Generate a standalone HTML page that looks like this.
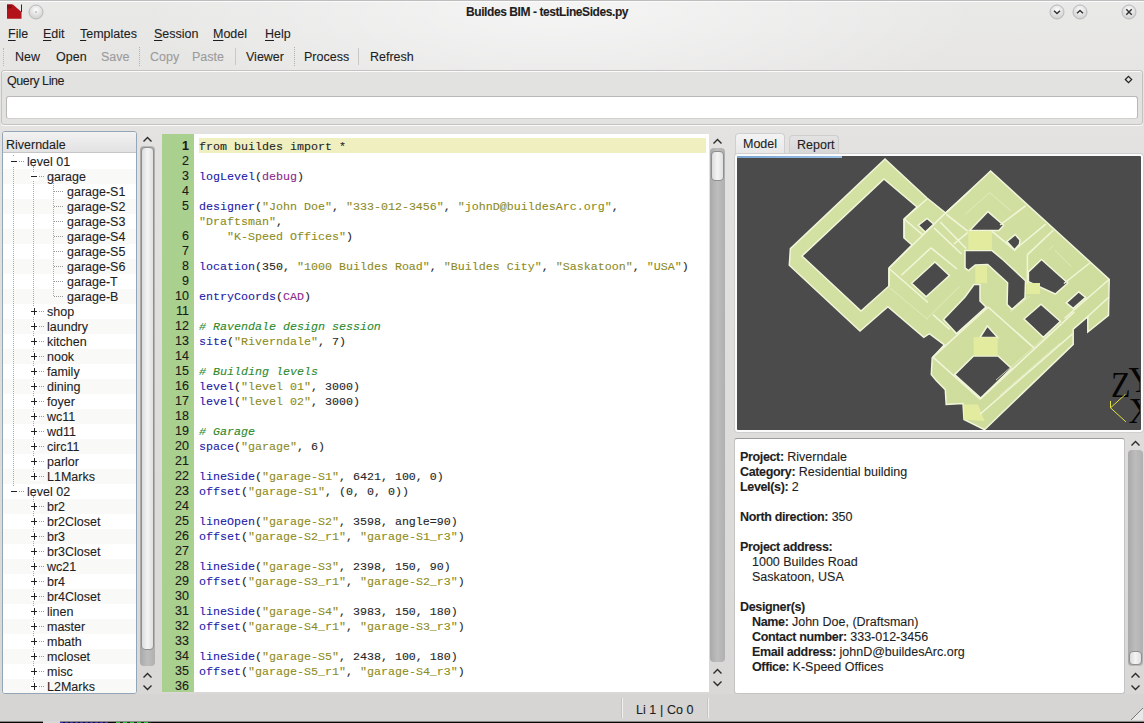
<!DOCTYPE html>
<html><head><meta charset="utf-8">
<style>
*{box-sizing:border-box;margin:0;padding:0}
html,body{width:1144px;height:723px;overflow:hidden}
body{position:relative;background:#e0dfde;font-family:"Liberation Sans",sans-serif;font-size:12.5px;color:#1e1e22;-webkit-text-stroke:0.1px currentColor}
.a{position:absolute;white-space:pre}
u{text-underline-offset:2px}
.t{position:absolute;white-space:pre;line-height:15px;height:15px}
.mono{font-family:"Liberation Mono",monospace}
.g{color:#9b9b9b}
.fn{color:#2121a8}
.st{color:#8c8c1c}
.cn{color:#8a2a8a}
.cm{color:#2c8a2c;font-style:italic}
.ar{width:9px;height:5px}
</style></head><body>

<div class="a" style="left:0;top:0;width:1144px;height:697px;background:linear-gradient(#e9e9e8 0px,#e3e2e1 140px,#d9d8d7 697px)"></div>
<div class="a" style="left:0;top:0;width:1144px;height:200px;background:radial-gradient(ellipse 420px 120px at 560px 10px,rgba(255,255,255,.55),rgba(255,255,255,0))"></div>
<div class="a" style="left:0;top:694px;width:1144px;height:27px;background:#d6d5d4"></div>
<div class="a" style="left:0;top:721px;width:1144px;height:1px;background:#8a8a8a"></div>
<div class="a" style="left:0;top:722px;width:1144px;height:1px;background:#060606"></div>
<div class="a" style="left:43px;top:721px;width:17px;height:2px;background:#d8d8d8"></div>
<div class="a" style="left:60px;top:722px;width:48px;height:1px;background:repeating-linear-gradient(90deg,#3a32a0 0 3px,#101030 3px 5px)"></div>
<div class="a" style="left:116px;top:722px;width:35px;height:1px;background:repeating-linear-gradient(90deg,#38c040 0 4px,#103010 4px 7px)"></div>
<div class="a" style="left:0;top:0;width:1144px;height:1px;background:#bdbdbd"></div>
<div class="a" style="left:0;top:1px;width:1144px;height:1px;background:#fbfbfb"></div>
<div class="t" style="left:466px;top:5px;font-weight:bold;font-size:12px;letter-spacing:-0.42px">Buildes BIM - testLineSides.py</div>
<svg class="a" style="left:6px;top:3px" width="18" height="18" viewBox="0 0 18 18">
<path d="M1 1.5 L7 1.5 L15.5 9 L15.5 15.8 L1 15.8 Z" fill="#b3141b"/>
<path d="M1 1.5 L6 1.5 L6 5 L1 6 Z" fill="#8a0f14"/>
<path d="M15.5 1.5 L15.5 9" stroke="#2a2a2a" stroke-width="1"/>
</svg>
<svg class="a" style="left:27px;top:3px" width="18" height="18" viewBox="0 0 18 18">
<defs><radialGradient id="cg36" cx="50%" cy="35%" r="60%"><stop offset="0" stop-color="#fdfdfd"/><stop offset="1" stop-color="#d2d2d2"/></radialGradient></defs>
<circle cx="9" cy="9" r="7" fill="url(#cg36)" stroke="#b9b9b9" stroke-width="1"/><circle cx="9" cy="9" r="0.7" fill="#888"/></svg>
<svg class="a" style="left:1048px;top:3px" width="18" height="18" viewBox="0 0 18 18">
<defs><radialGradient id="cg1057" cx="50%" cy="35%" r="60%"><stop offset="0" stop-color="#fdfdfd"/><stop offset="1" stop-color="#d2d2d2"/></radialGradient></defs>
<circle cx="9" cy="9" r="7" fill="url(#cg1057)" stroke="#b9b9b9" stroke-width="1"/><path d="M6 7.8 L9 10.5 L12 7.8" fill="none" stroke="#333" stroke-width="1.5"/></svg>
<svg class="a" style="left:1071px;top:3px" width="18" height="18" viewBox="0 0 18 18">
<defs><radialGradient id="cg1080" cx="50%" cy="35%" r="60%"><stop offset="0" stop-color="#fdfdfd"/><stop offset="1" stop-color="#d2d2d2"/></radialGradient></defs>
<circle cx="9" cy="9" r="7" fill="url(#cg1080)" stroke="#b9b9b9" stroke-width="1"/><path d="M6 10.3 L9 7.5 L12 10.3" fill="none" stroke="#333" stroke-width="1.5"/></svg>
<svg class="a" style="left:1120px;top:3px" width="18" height="18" viewBox="0 0 18 18">
<defs><radialGradient id="cg1129" cx="50%" cy="35%" r="60%"><stop offset="0" stop-color="#fdfdfd"/><stop offset="1" stop-color="#d2d2d2"/></radialGradient></defs>
<circle cx="9" cy="9" r="7" fill="url(#cg1129)" stroke="#b9b9b9" stroke-width="1"/><path d="M6.3 6.3 L11.7 11.7 M11.7 6.3 L6.3 11.7" fill="none" stroke="#333" stroke-width="1.5"/></svg>
<div class="t" style="left:8px;top:27px"><u>F</u>ile</div>
<div class="t" style="left:43px;top:27px"><u>E</u>dit</div>
<div class="t" style="left:80px;top:27px"><u>T</u>emplates</div>
<div class="t" style="left:154px;top:27px"><u>S</u>ession</div>
<div class="t" style="left:213px;top:27px"><u>M</u>odel</div>
<div class="t" style="left:265px;top:27px"><u>H</u>elp</div>
<div class="a" style="left:3px;top:48px;width:2px;height:18px;border-left:1px dotted #b8b8b8"></div>
<div class="t" style="left:15px;top:50px">New</div>
<div class="t" style="left:56px;top:50px">Open</div>
<div class="t g" style="left:101px;top:50px">Save</div>
<div class="t g" style="left:150px;top:50px">Copy</div>
<div class="t g" style="left:192px;top:50px">Paste</div>
<div class="t" style="left:246px;top:50px">Viewer</div>
<div class="t" style="left:304px;top:50px">Process</div>
<div class="t" style="left:370px;top:50px">Refresh</div>
<div class="a" style="left:139px;top:47px;width:1px;height:19px;border-left:1px dotted #b0b0b0"></div>
<div class="a" style="left:294px;top:47px;width:1px;height:19px;border-left:1px dotted #b0b0b0"></div>
<div class="a" style="left:235px;top:48px;width:1px;height:17px;background:#c8c8c8"></div>
<div class="a" style="left:358px;top:48px;width:1px;height:17px;background:#c8c8c8"></div>
<div class="a" style="left:1px;top:70px;width:1142px;height:55px;border:1px solid #c4c3c2;border-radius:3px;background:#e2e2e1;box-shadow:inset 0 1px 0 #fbfbfb,0 1px 0 #fafafa"></div>
<div class="t" style="left:7px;top:74px;letter-spacing:-0.4px">Query Line</div>
<svg class="a" style="left:1124px;top:75px" width="9" height="9" viewBox="0 0 9 9"><path d="M4.5 1.3 L7.7 4.5 L4.5 7.7 L1.3 4.5 Z" fill="none" stroke="#222" stroke-width="1.2"/></svg>
<div class="a" style="left:6px;top:96px;width:1132px;height:23px;border:1px solid #b9b8b7;border-bottom-color:#d2d1d0;border-radius:3px;background:#fff"></div>
<div class="a" style="left:2px;top:131px;width:135px;height:563px;border:1px solid #93a6b8;border-radius:3px;background:#fff;overflow:hidden">
<div class="a" style="left:0;top:0;width:133px;height:21px;background:linear-gradient(#f2f2f2,#e2e2e2);border-bottom:1px solid #c6c6c6"></div>
<div class="t" style="left:3px;top:6px">Riverndale</div>
<div class="a" style="left:0;top:37px;width:133px;height:15px;background:#f9f9f8"></div>
<div class="a" style="left:0;top:67px;width:133px;height:15px;background:#f9f9f8"></div>
<div class="a" style="left:0;top:97px;width:133px;height:15px;background:#f9f9f8"></div>
<div class="a" style="left:0;top:127px;width:133px;height:15px;background:#f9f9f8"></div>
<div class="a" style="left:0;top:157px;width:133px;height:15px;background:#f9f9f8"></div>
<div class="a" style="left:0;top:187px;width:133px;height:15px;background:#f9f9f8"></div>
<div class="a" style="left:0;top:217px;width:133px;height:15px;background:#f9f9f8"></div>
<div class="a" style="left:0;top:247px;width:133px;height:15px;background:#f9f9f8"></div>
<div class="a" style="left:0;top:277px;width:133px;height:15px;background:#f9f9f8"></div>
<div class="a" style="left:0;top:307px;width:133px;height:15px;background:#f9f9f8"></div>
<div class="a" style="left:0;top:337px;width:133px;height:15px;background:#f9f9f8"></div>
<div class="a" style="left:0;top:367px;width:133px;height:15px;background:#f9f9f8"></div>
<div class="a" style="left:0;top:397px;width:133px;height:15px;background:#f9f9f8"></div>
<div class="a" style="left:0;top:427px;width:133px;height:15px;background:#f9f9f8"></div>
<div class="a" style="left:0;top:457px;width:133px;height:15px;background:#f9f9f8"></div>
<div class="a" style="left:0;top:487px;width:133px;height:15px;background:#f9f9f8"></div>
<div class="a" style="left:0;top:517px;width:133px;height:15px;background:#f9f9f8"></div>
<div class="a" style="left:0;top:547px;width:133px;height:15px;background:#f9f9f8"></div>
<div class="a" style="left:10px;top:23px;width:1px;height:333px;border-left:1px dotted #aaa"></div>
<div class="a" style="left:30px;top:34px;width:1px;height:310px;border-left:1px dotted #aaa"></div>
<div class="a" style="left:50px;top:45px;width:1px;height:119px;border-left:1px dotted #aaa"></div>
<div class="a" style="left:30px;top:364px;width:1px;height:190px;border-left:1px dotted #aaa"></div>
<div class="t" style="left:24px;top:23px">level 01</div>
<div class="a" style="left:7px;top:25px;width:9px;height:9px;background:#fff"></div>
<div class="a" style="left:8px;top:29px;width:6px;height:1px;background:#222"></div>
<div class="a" style="left:16px;top:29px;width:5px;height:1px;border-top:1px dotted #999"></div>
<div class="t" style="left:44px;top:38px">garage</div>
<div class="a" style="left:27px;top:40px;width:9px;height:9px;background:#fff"></div>
<div class="a" style="left:28px;top:44px;width:6px;height:1px;background:#222"></div>
<div class="a" style="left:36px;top:44px;width:5px;height:1px;border-top:1px dotted #999"></div>
<div class="t" style="left:64px;top:53px">garage-S1</div>
<div class="a" style="left:51px;top:59px;width:9px;height:1px;border-top:1px dotted #999"></div>
<div class="t" style="left:64px;top:68px">garage-S2</div>
<div class="a" style="left:51px;top:74px;width:9px;height:1px;border-top:1px dotted #999"></div>
<div class="t" style="left:64px;top:83px">garage-S3</div>
<div class="a" style="left:51px;top:89px;width:9px;height:1px;border-top:1px dotted #999"></div>
<div class="t" style="left:64px;top:98px">garage-S4</div>
<div class="a" style="left:51px;top:104px;width:9px;height:1px;border-top:1px dotted #999"></div>
<div class="t" style="left:64px;top:113px">garage-S5</div>
<div class="a" style="left:51px;top:119px;width:9px;height:1px;border-top:1px dotted #999"></div>
<div class="t" style="left:64px;top:128px">garage-S6</div>
<div class="a" style="left:51px;top:134px;width:9px;height:1px;border-top:1px dotted #999"></div>
<div class="t" style="left:64px;top:143px">garage-T</div>
<div class="a" style="left:51px;top:149px;width:9px;height:1px;border-top:1px dotted #999"></div>
<div class="t" style="left:64px;top:158px">garage-B</div>
<div class="a" style="left:51px;top:164px;width:9px;height:1px;border-top:1px dotted #999"></div>
<div class="t" style="left:44px;top:173px">shop</div>
<div class="a" style="left:27px;top:175px;width:9px;height:9px;background:#fff"></div>
<div class="a" style="left:28px;top:179px;width:6px;height:1px;background:#222"></div>
<div class="a" style="left:30.5px;top:176px;width:1px;height:7px;background:#222"></div>
<div class="a" style="left:36px;top:179px;width:5px;height:1px;border-top:1px dotted #999"></div>
<div class="t" style="left:44px;top:188px">laundry</div>
<div class="a" style="left:27px;top:190px;width:9px;height:9px;background:#fff"></div>
<div class="a" style="left:28px;top:194px;width:6px;height:1px;background:#222"></div>
<div class="a" style="left:30.5px;top:191px;width:1px;height:7px;background:#222"></div>
<div class="a" style="left:36px;top:194px;width:5px;height:1px;border-top:1px dotted #999"></div>
<div class="t" style="left:44px;top:203px">kitchen</div>
<div class="a" style="left:27px;top:205px;width:9px;height:9px;background:#fff"></div>
<div class="a" style="left:28px;top:209px;width:6px;height:1px;background:#222"></div>
<div class="a" style="left:30.5px;top:206px;width:1px;height:7px;background:#222"></div>
<div class="a" style="left:36px;top:209px;width:5px;height:1px;border-top:1px dotted #999"></div>
<div class="t" style="left:44px;top:218px">nook</div>
<div class="a" style="left:27px;top:220px;width:9px;height:9px;background:#fff"></div>
<div class="a" style="left:28px;top:224px;width:6px;height:1px;background:#222"></div>
<div class="a" style="left:30.5px;top:221px;width:1px;height:7px;background:#222"></div>
<div class="a" style="left:36px;top:224px;width:5px;height:1px;border-top:1px dotted #999"></div>
<div class="t" style="left:44px;top:233px">family</div>
<div class="a" style="left:27px;top:235px;width:9px;height:9px;background:#fff"></div>
<div class="a" style="left:28px;top:239px;width:6px;height:1px;background:#222"></div>
<div class="a" style="left:30.5px;top:236px;width:1px;height:7px;background:#222"></div>
<div class="a" style="left:36px;top:239px;width:5px;height:1px;border-top:1px dotted #999"></div>
<div class="t" style="left:44px;top:248px">dining</div>
<div class="a" style="left:27px;top:250px;width:9px;height:9px;background:#fff"></div>
<div class="a" style="left:28px;top:254px;width:6px;height:1px;background:#222"></div>
<div class="a" style="left:30.5px;top:251px;width:1px;height:7px;background:#222"></div>
<div class="a" style="left:36px;top:254px;width:5px;height:1px;border-top:1px dotted #999"></div>
<div class="t" style="left:44px;top:263px">foyer</div>
<div class="a" style="left:27px;top:265px;width:9px;height:9px;background:#fff"></div>
<div class="a" style="left:28px;top:269px;width:6px;height:1px;background:#222"></div>
<div class="a" style="left:30.5px;top:266px;width:1px;height:7px;background:#222"></div>
<div class="a" style="left:36px;top:269px;width:5px;height:1px;border-top:1px dotted #999"></div>
<div class="t" style="left:44px;top:278px">wc11</div>
<div class="a" style="left:27px;top:280px;width:9px;height:9px;background:#fff"></div>
<div class="a" style="left:28px;top:284px;width:6px;height:1px;background:#222"></div>
<div class="a" style="left:30.5px;top:281px;width:1px;height:7px;background:#222"></div>
<div class="a" style="left:36px;top:284px;width:5px;height:1px;border-top:1px dotted #999"></div>
<div class="t" style="left:44px;top:293px">wd11</div>
<div class="a" style="left:27px;top:295px;width:9px;height:9px;background:#fff"></div>
<div class="a" style="left:28px;top:299px;width:6px;height:1px;background:#222"></div>
<div class="a" style="left:30.5px;top:296px;width:1px;height:7px;background:#222"></div>
<div class="a" style="left:36px;top:299px;width:5px;height:1px;border-top:1px dotted #999"></div>
<div class="t" style="left:44px;top:308px">circ11</div>
<div class="a" style="left:27px;top:310px;width:9px;height:9px;background:#fff"></div>
<div class="a" style="left:28px;top:314px;width:6px;height:1px;background:#222"></div>
<div class="a" style="left:30.5px;top:311px;width:1px;height:7px;background:#222"></div>
<div class="a" style="left:36px;top:314px;width:5px;height:1px;border-top:1px dotted #999"></div>
<div class="t" style="left:44px;top:323px">parlor</div>
<div class="a" style="left:27px;top:325px;width:9px;height:9px;background:#fff"></div>
<div class="a" style="left:28px;top:329px;width:6px;height:1px;background:#222"></div>
<div class="a" style="left:30.5px;top:326px;width:1px;height:7px;background:#222"></div>
<div class="a" style="left:36px;top:329px;width:5px;height:1px;border-top:1px dotted #999"></div>
<div class="t" style="left:44px;top:338px">L1Marks</div>
<div class="a" style="left:27px;top:340px;width:9px;height:9px;background:#fff"></div>
<div class="a" style="left:28px;top:344px;width:6px;height:1px;background:#222"></div>
<div class="a" style="left:30.5px;top:341px;width:1px;height:7px;background:#222"></div>
<div class="a" style="left:36px;top:344px;width:5px;height:1px;border-top:1px dotted #999"></div>
<div class="t" style="left:24px;top:353px">level 02</div>
<div class="a" style="left:7px;top:355px;width:9px;height:9px;background:#fff"></div>
<div class="a" style="left:8px;top:359px;width:6px;height:1px;background:#222"></div>
<div class="a" style="left:16px;top:359px;width:5px;height:1px;border-top:1px dotted #999"></div>
<div class="t" style="left:44px;top:368px">br2</div>
<div class="a" style="left:27px;top:370px;width:9px;height:9px;background:#fff"></div>
<div class="a" style="left:28px;top:374px;width:6px;height:1px;background:#222"></div>
<div class="a" style="left:30.5px;top:371px;width:1px;height:7px;background:#222"></div>
<div class="a" style="left:36px;top:374px;width:5px;height:1px;border-top:1px dotted #999"></div>
<div class="t" style="left:44px;top:383px">br2Closet</div>
<div class="a" style="left:27px;top:385px;width:9px;height:9px;background:#fff"></div>
<div class="a" style="left:28px;top:389px;width:6px;height:1px;background:#222"></div>
<div class="a" style="left:30.5px;top:386px;width:1px;height:7px;background:#222"></div>
<div class="a" style="left:36px;top:389px;width:5px;height:1px;border-top:1px dotted #999"></div>
<div class="t" style="left:44px;top:398px">br3</div>
<div class="a" style="left:27px;top:400px;width:9px;height:9px;background:#fff"></div>
<div class="a" style="left:28px;top:404px;width:6px;height:1px;background:#222"></div>
<div class="a" style="left:30.5px;top:401px;width:1px;height:7px;background:#222"></div>
<div class="a" style="left:36px;top:404px;width:5px;height:1px;border-top:1px dotted #999"></div>
<div class="t" style="left:44px;top:413px">br3Closet</div>
<div class="a" style="left:27px;top:415px;width:9px;height:9px;background:#fff"></div>
<div class="a" style="left:28px;top:419px;width:6px;height:1px;background:#222"></div>
<div class="a" style="left:30.5px;top:416px;width:1px;height:7px;background:#222"></div>
<div class="a" style="left:36px;top:419px;width:5px;height:1px;border-top:1px dotted #999"></div>
<div class="t" style="left:44px;top:428px">wc21</div>
<div class="a" style="left:27px;top:430px;width:9px;height:9px;background:#fff"></div>
<div class="a" style="left:28px;top:434px;width:6px;height:1px;background:#222"></div>
<div class="a" style="left:30.5px;top:431px;width:1px;height:7px;background:#222"></div>
<div class="a" style="left:36px;top:434px;width:5px;height:1px;border-top:1px dotted #999"></div>
<div class="t" style="left:44px;top:443px">br4</div>
<div class="a" style="left:27px;top:445px;width:9px;height:9px;background:#fff"></div>
<div class="a" style="left:28px;top:449px;width:6px;height:1px;background:#222"></div>
<div class="a" style="left:30.5px;top:446px;width:1px;height:7px;background:#222"></div>
<div class="a" style="left:36px;top:449px;width:5px;height:1px;border-top:1px dotted #999"></div>
<div class="t" style="left:44px;top:458px">br4Closet</div>
<div class="a" style="left:27px;top:460px;width:9px;height:9px;background:#fff"></div>
<div class="a" style="left:28px;top:464px;width:6px;height:1px;background:#222"></div>
<div class="a" style="left:30.5px;top:461px;width:1px;height:7px;background:#222"></div>
<div class="a" style="left:36px;top:464px;width:5px;height:1px;border-top:1px dotted #999"></div>
<div class="t" style="left:44px;top:473px">linen</div>
<div class="a" style="left:27px;top:475px;width:9px;height:9px;background:#fff"></div>
<div class="a" style="left:28px;top:479px;width:6px;height:1px;background:#222"></div>
<div class="a" style="left:30.5px;top:476px;width:1px;height:7px;background:#222"></div>
<div class="a" style="left:36px;top:479px;width:5px;height:1px;border-top:1px dotted #999"></div>
<div class="t" style="left:44px;top:488px">master</div>
<div class="a" style="left:27px;top:490px;width:9px;height:9px;background:#fff"></div>
<div class="a" style="left:28px;top:494px;width:6px;height:1px;background:#222"></div>
<div class="a" style="left:30.5px;top:491px;width:1px;height:7px;background:#222"></div>
<div class="a" style="left:36px;top:494px;width:5px;height:1px;border-top:1px dotted #999"></div>
<div class="t" style="left:44px;top:503px">mbath</div>
<div class="a" style="left:27px;top:505px;width:9px;height:9px;background:#fff"></div>
<div class="a" style="left:28px;top:509px;width:6px;height:1px;background:#222"></div>
<div class="a" style="left:30.5px;top:506px;width:1px;height:7px;background:#222"></div>
<div class="a" style="left:36px;top:509px;width:5px;height:1px;border-top:1px dotted #999"></div>
<div class="t" style="left:44px;top:518px">mcloset</div>
<div class="a" style="left:27px;top:520px;width:9px;height:9px;background:#fff"></div>
<div class="a" style="left:28px;top:524px;width:6px;height:1px;background:#222"></div>
<div class="a" style="left:30.5px;top:521px;width:1px;height:7px;background:#222"></div>
<div class="a" style="left:36px;top:524px;width:5px;height:1px;border-top:1px dotted #999"></div>
<div class="t" style="left:44px;top:533px">misc</div>
<div class="a" style="left:27px;top:535px;width:9px;height:9px;background:#fff"></div>
<div class="a" style="left:28px;top:539px;width:6px;height:1px;background:#222"></div>
<div class="a" style="left:30.5px;top:536px;width:1px;height:7px;background:#222"></div>
<div class="a" style="left:36px;top:539px;width:5px;height:1px;border-top:1px dotted #999"></div>
<div class="t" style="left:44px;top:548px">L2Marks</div>
<div class="a" style="left:27px;top:550px;width:9px;height:9px;background:#fff"></div>
<div class="a" style="left:28px;top:554px;width:6px;height:1px;background:#222"></div>
<div class="a" style="left:30.5px;top:551px;width:1px;height:7px;background:#222"></div>
<div class="a" style="left:36px;top:554px;width:5px;height:1px;border-top:1px dotted #999"></div>
</div>
<svg class="a" style="left:142px;top:136px" width="11" height="7" viewBox="0 0 11 7"><path d="M1.5 5.5 L5.5 1.5 L9.5 5.5" fill="none" stroke="#2a2a2a" stroke-width="1.4"/></svg>
<div class="a" style="left:140px;top:146px;width:15px;height:520px;border-radius:4px;background:linear-gradient(90deg,#a9a9a9,#bdbdbd 50%,#b0b0b0);"></div>
<div class="a" style="left:141px;top:147px;width:13px;height:503px;border-radius:4px;border:1px solid #8f8f8f;background:linear-gradient(90deg,#dcdcdc,#f4f4f4 50%,#e0e0e0)"></div>
<svg class="a" style="left:142px;top:672px" width="11" height="7" viewBox="0 0 11 7"><path d="M1.5 5.5 L5.5 1.5 L9.5 5.5" fill="none" stroke="#2a2a2a" stroke-width="1.4"/></svg>
<svg class="a" style="left:142px;top:684px" width="11" height="7" viewBox="0 0 11 7"><path d="M1.5 1.5 L5.5 5.5 L9.5 1.5" fill="none" stroke="#2a2a2a" stroke-width="1.4"/></svg>
<svg class="a" style="left:712px;top:138px" width="11" height="7" viewBox="0 0 11 7"><path d="M1.5 5.5 L5.5 1.5 L9.5 5.5" fill="none" stroke="#2a2a2a" stroke-width="1.4"/></svg>
<div class="a" style="left:710px;top:148px;width:15px;height:514px;border-radius:4px;background:linear-gradient(90deg,#a9a9a9,#bdbdbd 50%,#b0b0b0);"></div>
<div class="a" style="left:711px;top:151px;width:13px;height:30px;border-radius:4px;border:1px solid #8f8f8f;background:linear-gradient(90deg,#dcdcdc,#f4f4f4 50%,#e0e0e0)"></div>
<svg class="a" style="left:712px;top:668px" width="11" height="7" viewBox="0 0 11 7"><path d="M1.5 5.5 L5.5 1.5 L9.5 5.5" fill="none" stroke="#2a2a2a" stroke-width="1.4"/></svg>
<svg class="a" style="left:712px;top:680px" width="11" height="7" viewBox="0 0 11 7"><path d="M1.5 1.5 L5.5 5.5 L9.5 1.5" fill="none" stroke="#2a2a2a" stroke-width="1.4"/></svg>
<svg class="a" style="left:1130px;top:440px" width="11" height="7" viewBox="0 0 11 7"><path d="M1.5 5.5 L5.5 1.5 L9.5 5.5" fill="none" stroke="#2a2a2a" stroke-width="1.4"/></svg>
<div class="a" style="left:1128px;top:450px;width:15px;height:216px;border-radius:4px;background:linear-gradient(90deg,#a9a9a9,#bdbdbd 50%,#b0b0b0);"></div>
<div class="a" style="left:1129px;top:651px;width:13px;height:14px;border-radius:4px;border:1px solid #8f8f8f;background:linear-gradient(90deg,#dcdcdc,#f4f4f4 50%,#e0e0e0)"></div>
<svg class="a" style="left:1130px;top:672px" width="11" height="7" viewBox="0 0 11 7"><path d="M1.5 5.5 L5.5 1.5 L9.5 5.5" fill="none" stroke="#2a2a2a" stroke-width="1.4"/></svg>
<svg class="a" style="left:1130px;top:684px" width="11" height="7" viewBox="0 0 11 7"><path d="M1.5 1.5 L5.5 5.5 L9.5 1.5" fill="none" stroke="#2a2a2a" stroke-width="1.4"/></svg>
<div class="a" style="left:162px;top:134px;width:547px;height:558px;background:#fff"></div>
<div class="a" style="left:162px;top:134px;width:32px;height:558px;background:#a9d08e"></div>
<div class="a" style="left:199px;top:138px;width:507px;height:15px;background:#efefbf"></div>
<div class="t" style="left:162px;top:139px;width:27px;text-align:right;font-weight:bold;color:#1a1a1a">1</div>
<div class="t mono" style="left:199px;top:140px;font-size:11.67px;color:#262626">from buildes import *</div>
<div class="t" style="left:162px;top:154px;width:27px;text-align:right;color:#1a1a1a">2</div>
<div class="t" style="left:162px;top:169px;width:27px;text-align:right;color:#1a1a1a">3</div>
<div class="t mono" style="left:199px;top:170px;font-size:11.67px;color:#262626"><span class="fn">logLevel</span>(<span class="cn">debug</span>)</div>
<div class="t" style="left:162px;top:184px;width:27px;text-align:right;color:#1a1a1a">4</div>
<div class="t" style="left:162px;top:199px;width:27px;text-align:right;color:#1a1a1a">5</div>
<div class="t mono" style="left:199px;top:200px;font-size:11.67px;color:#262626"><span class="fn">designer</span>(<span class="st">"John Doe"</span>, <span class="st">"333-012-3456"</span>, <span class="st">"johnD@buildesArc.org"</span>,</div>
<div class="t mono" style="left:199px;top:215px;font-size:11.67px;color:#262626"><span class="st">"Draftsman"</span>,</div>
<div class="t" style="left:162px;top:229px;width:27px;text-align:right;color:#1a1a1a">6</div>
<div class="t mono" style="left:199px;top:230px;font-size:11.67px;color:#262626">    <span class="st">"K-Speed Offices"</span>)</div>
<div class="t" style="left:162px;top:244px;width:27px;text-align:right;color:#1a1a1a">7</div>
<div class="t" style="left:162px;top:259px;width:27px;text-align:right;color:#1a1a1a">8</div>
<div class="t mono" style="left:199px;top:260px;font-size:11.67px;color:#262626"><span class="fn">location</span>(350, <span class="st">"1000 Buildes Road"</span>, <span class="st">"Buildes City"</span>, <span class="st">"Saskatoon"</span>, <span class="st">"USA"</span>)</div>
<div class="t" style="left:162px;top:274px;width:27px;text-align:right;color:#1a1a1a">9</div>
<div class="t" style="left:162px;top:289px;width:27px;text-align:right;color:#1a1a1a">10</div>
<div class="t mono" style="left:199px;top:290px;font-size:11.67px;color:#262626"><span class="fn">entryCoords</span>(<span class="cn">CAD</span>)</div>
<div class="t" style="left:162px;top:304px;width:27px;text-align:right;color:#1a1a1a">11</div>
<div class="t" style="left:162px;top:319px;width:27px;text-align:right;color:#1a1a1a">12</div>
<div class="t mono" style="left:199px;top:320px;font-size:11.67px;color:#262626"><span class="cm"># Ravendale design session</span></div>
<div class="t" style="left:162px;top:334px;width:27px;text-align:right;color:#1a1a1a">13</div>
<div class="t mono" style="left:199px;top:335px;font-size:11.67px;color:#262626"><span class="fn">site</span>(<span class="st">"Riverndale"</span>, 7)</div>
<div class="t" style="left:162px;top:349px;width:27px;text-align:right;color:#1a1a1a">14</div>
<div class="t" style="left:162px;top:364px;width:27px;text-align:right;color:#1a1a1a">15</div>
<div class="t mono" style="left:199px;top:365px;font-size:11.67px;color:#262626"><span class="cm"># Building levels</span></div>
<div class="t" style="left:162px;top:379px;width:27px;text-align:right;color:#1a1a1a">16</div>
<div class="t mono" style="left:199px;top:380px;font-size:11.67px;color:#262626"><span class="fn">level</span>(<span class="st">"level 01"</span>, 3000)</div>
<div class="t" style="left:162px;top:394px;width:27px;text-align:right;color:#1a1a1a">17</div>
<div class="t mono" style="left:199px;top:395px;font-size:11.67px;color:#262626"><span class="fn">level</span>(<span class="st">"level 02"</span>, 3000)</div>
<div class="t" style="left:162px;top:409px;width:27px;text-align:right;color:#1a1a1a">18</div>
<div class="t" style="left:162px;top:424px;width:27px;text-align:right;color:#1a1a1a">19</div>
<div class="t mono" style="left:199px;top:425px;font-size:11.67px;color:#262626"><span class="cm"># Garage</span></div>
<div class="t" style="left:162px;top:439px;width:27px;text-align:right;color:#1a1a1a">20</div>
<div class="t mono" style="left:199px;top:440px;font-size:11.67px;color:#262626"><span class="fn">space</span>(<span class="st">"garage"</span>, 6)</div>
<div class="t" style="left:162px;top:454px;width:27px;text-align:right;color:#1a1a1a">21</div>
<div class="t" style="left:162px;top:469px;width:27px;text-align:right;color:#1a1a1a">22</div>
<div class="t mono" style="left:199px;top:470px;font-size:11.67px;color:#262626"><span class="fn">lineSide</span>(<span class="st">"garage-S1"</span>, 6421, 100, 0)</div>
<div class="t" style="left:162px;top:484px;width:27px;text-align:right;color:#1a1a1a">23</div>
<div class="t mono" style="left:199px;top:485px;font-size:11.67px;color:#262626"><span class="fn">offset</span>(<span class="st">"garage-S1"</span>, (0, 0, 0))</div>
<div class="t" style="left:162px;top:499px;width:27px;text-align:right;color:#1a1a1a">24</div>
<div class="t" style="left:162px;top:514px;width:27px;text-align:right;color:#1a1a1a">25</div>
<div class="t mono" style="left:199px;top:515px;font-size:11.67px;color:#262626"><span class="fn">lineOpen</span>(<span class="st">"garage-S2"</span>, 3598, angle=90)</div>
<div class="t" style="left:162px;top:529px;width:27px;text-align:right;color:#1a1a1a">26</div>
<div class="t mono" style="left:199px;top:530px;font-size:11.67px;color:#262626"><span class="fn">offset</span>(<span class="st">"garage-S2_r1"</span>, <span class="st">"garage-S1_r3"</span>)</div>
<div class="t" style="left:162px;top:544px;width:27px;text-align:right;color:#1a1a1a">27</div>
<div class="t" style="left:162px;top:559px;width:27px;text-align:right;color:#1a1a1a">28</div>
<div class="t mono" style="left:199px;top:560px;font-size:11.67px;color:#262626"><span class="fn">lineSide</span>(<span class="st">"garage-S3"</span>, 2398, 150, 90)</div>
<div class="t" style="left:162px;top:574px;width:27px;text-align:right;color:#1a1a1a">29</div>
<div class="t mono" style="left:199px;top:575px;font-size:11.67px;color:#262626"><span class="fn">offset</span>(<span class="st">"garage-S3_r1"</span>, <span class="st">"garage-S2_r3"</span>)</div>
<div class="t" style="left:162px;top:589px;width:27px;text-align:right;color:#1a1a1a">30</div>
<div class="t" style="left:162px;top:604px;width:27px;text-align:right;color:#1a1a1a">31</div>
<div class="t mono" style="left:199px;top:605px;font-size:11.67px;color:#262626"><span class="fn">lineSide</span>(<span class="st">"garage-S4"</span>, 3983, 150, 180)</div>
<div class="t" style="left:162px;top:619px;width:27px;text-align:right;color:#1a1a1a">32</div>
<div class="t mono" style="left:199px;top:620px;font-size:11.67px;color:#262626"><span class="fn">offset</span>(<span class="st">"garage-S4_r1"</span>, <span class="st">"garage-S3_r3"</span>)</div>
<div class="t" style="left:162px;top:634px;width:27px;text-align:right;color:#1a1a1a">33</div>
<div class="t" style="left:162px;top:649px;width:27px;text-align:right;color:#1a1a1a">34</div>
<div class="t mono" style="left:199px;top:650px;font-size:11.67px;color:#262626"><span class="fn">lineSide</span>(<span class="st">"garage-S5"</span>, 2438, 100, 180)</div>
<div class="t" style="left:162px;top:664px;width:27px;text-align:right;color:#1a1a1a">35</div>
<div class="t mono" style="left:199px;top:665px;font-size:11.67px;color:#262626"><span class="fn">offset</span>(<span class="st">"garage-S5_r1"</span>, <span class="st">"garage-S4_r3"</span>)</div>
<div class="t" style="left:162px;top:679px;width:27px;text-align:right;color:#1a1a1a">36</div>
<div class="a" style="left:735px;top:133px;width:50px;height:24px;border:1px solid #cfcfcf;border-bottom:none;border-radius:4px 4px 0 0;background:linear-gradient(#f3f3f3,#e6e6e6)"></div>
<div class="a" style="left:789px;top:135px;width:50px;height:21px;border:1px solid #cdcdcd;border-bottom:none;border-radius:4px 4px 0 0;background:linear-gradient(#e3e3e3,#d5d5d5)"></div>
<div class="t" style="left:743px;top:137px">Model</div>
<div class="t" style="left:797px;top:138px">Report</div>
<div class="a" style="left:735px;top:154px;width:408px;height:278px;border:2px solid #fbfbfb;border-radius:3px;background:#4c4b4b;box-shadow:0 0 0 1px #cfcfcf"></div>
<div class="a" style="left:737px;top:156px;width:105px;height:2px;background:linear-gradient(90deg,#7aa7d6,#9cc0e6)"></div>
<svg class="a" style="left:737px;top:156px" width="403" height="274" viewBox="0 0 403 274">
<defs><linearGradient id="wl" x1="0" y1="0" x2="1" y2="1"><stop offset="0" stop-color="#d4e2a4"/><stop offset="1" stop-color="#ccdb9a"/></linearGradient></defs>
<polygon points="148.0,3.0 190.0,42.0 208.7,57.0 253.6,15.0 372.2,123.4 371.5,159.4 350.8,176.0 350.8,160.7 336.2,173.2 336.2,188.4 247.5,273.7 227.0,263.4 226.0,247.5 209.2,248.5 208.3,233.6 199.0,224.2 194.3,218.6 195.2,201.8 207.4,188.8 192.4,177.6 186.8,181.3 150.9,150.8 123.0,175.0 52.3,109.3 53.4,92.7" fill="url(#wl)" stroke="#f1f6da" stroke-width="1.5"/>
<polygon points="147.0,23.0 180.0,51.0 167.0,63.0 167.0,82.0 175.0,89.0 152.0,112.0 152.0,130.0 124.0,155.0 65.0,100.0" fill="#4b4a4a" stroke="#f1f6da" stroke-width="1.5"/>
<polygon points="181.4,69.2 190.1,62.4 196.9,68.2 188.2,76.0" fill="#4b4a4a" stroke="#f1f6da" stroke-width="1.5"/>
<polygon points="232.7,74.5 251.0,55.6 266.6,69.2 262.0,74.5" fill="#4b4a4a" stroke="#f1f6da" stroke-width="1.5"/>
<polygon points="174.6,127.3 197.9,106.0 212.4,119.5 189.1,140.8" fill="#4b4a4a" stroke="#f1f6da" stroke-width="1.5"/>
<polygon points="206.5,163.5 228.0,141.0 237.0,128.5 243.0,128.5 243.0,145.0 249.0,151.0 219.5,177.6" fill="#4b4a4a" stroke="#f1f6da" stroke-width="1.5"/>
<polygon points="228.0,94.6 255.0,94.6 266.2,104.0 288.5,124.8 288.0,141.8 275.0,153.4 270.1,148.5 270.6,126.7 250.7,108.4 238.3,109.0 231.4,114.6 228.0,111.9" fill="#4b4a4a" stroke="#f1f6da" stroke-width="1.5"/>
<polygon points="269.9,85.5 278.2,78.6 283.0,84.1 282.4,88.3 277.5,93.8" fill="#4b4a4a" stroke="#f1f6da" stroke-width="1.5"/>
<polygon points="291.4,115.9 304.5,103.5 330.8,127.0 318.3,138.0 291.4,125.6" fill="#4b4a4a" stroke="#f1f6da" stroke-width="1.5"/>
<polygon points="329.3,146.9 341.8,135.8 348.7,141.4 336.2,152.4" fill="#4b4a4a" stroke="#f1f6da" stroke-width="1.5"/>
<polygon points="287.0,163.0 304.0,148.2 323.5,165.4 306.3,181.3" fill="#4b4a4a" stroke="#f1f6da" stroke-width="1.5"/>
<polygon points="217.6,218.6 236.5,200.0 261.0,200.0 274.4,212.2 243.7,242.0" fill="#4b4a4a" stroke="#f1f6da" stroke-width="1.5"/>
<polygon points="243.0,181.5 250.3,170.0 260.7,181.5" fill="#4b4a4a" stroke="#f1f6da" stroke-width="1.5"/>
<polygon points="231.4,75.2 254.9,75.2 254.9,93.9 231.4,93.9" fill="#e3eb9f"/>
<polygon points="238.3,109.8 250.0,109.8 250.0,127.1 238.3,127.1" fill="#e3eb9f"/>
<polygon points="289.5,127.0 303.0,127.0 303.0,138.0 289.5,138.0" fill="#e3eb9f"/>
<polygon points="236.7,181.3 260.7,181.3 260.7,199.6 236.7,199.6" fill="#e3eb9f"/>
<polygon points="226.5,248.5 241.0,248.5 247.5,265.0 227.0,263.4" fill="#e3eb9f"/>
<line x1="167.2" y1="63.0" x2="190.0" y2="43.0" stroke="#f1f6da" stroke-width="1.5"/>
<line x1="167.2" y1="63.0" x2="167.2" y2="81.7" stroke="#f1f6da" stroke-width="1.5"/>
<line x1="167.2" y1="63.0" x2="185.7" y2="78.9" stroke="#f1f6da" stroke-width="1.5"/>
<line x1="152.0" y1="112.0" x2="207.8" y2="57.6" stroke="#f1f6da" stroke-width="1.5"/>
<line x1="207.8" y1="57.6" x2="233.7" y2="34.0" stroke="#f1f6da" stroke-width="1.5"/>
<line x1="152.0" y1="112.5" x2="191.0" y2="146.5" stroke="#f1f6da" stroke-width="1.5"/>
<line x1="196.0" y1="158.6" x2="212.7" y2="173.5" stroke="#f1f6da" stroke-width="1.5"/>
<line x1="152.0" y1="112.0" x2="152.0" y2="130.0" stroke="#f1f6da" stroke-width="1.5"/>
<line x1="203.2" y1="66.0" x2="229.1" y2="92.6" stroke="#f1f6da" stroke-width="1.5"/>
<line x1="209.3" y1="58.4" x2="230.6" y2="75.1" stroke="#f1f6da" stroke-width="1.5"/>
<line x1="197.1" y1="72.0" x2="224.5" y2="98.0" stroke="#f1f6da" stroke-width="1.5"/>
<line x1="216.9" y1="88.0" x2="230.6" y2="76.6" stroke="#f1f6da" stroke-width="1.5"/>
<line x1="194.0" y1="91.8" x2="220.0" y2="113.0" stroke="#f1f6da" stroke-width="1.5"/>
<line x1="194.0" y1="91.8" x2="164.4" y2="119.2" stroke="#f1f6da" stroke-width="1.5"/>
<line x1="263.1" y1="69.0" x2="288.7" y2="49.6" stroke="#f1f6da" stroke-width="1.5"/>
<line x1="254.8" y1="75.2" x2="278.3" y2="94.6" stroke="#f1f6da" stroke-width="1.5"/>
<line x1="308.7" y1="68.1" x2="278.2" y2="93.3" stroke="#f1f6da" stroke-width="1.5"/>
<line x1="316.3" y1="74.2" x2="290.4" y2="98.6" stroke="#f1f6da" stroke-width="1.5"/>
<line x1="290.4" y1="98.6" x2="290.4" y2="127.5" stroke="#f1f6da" stroke-width="1.5"/>
<line x1="352.8" y1="107.0" x2="326.9" y2="127.5" stroke="#f1f6da" stroke-width="1.5"/>
<line x1="372.0" y1="123.5" x2="327.6" y2="162.2" stroke="#f1f6da" stroke-width="1.5"/>
<line x1="372.0" y1="141.0" x2="348.9" y2="162.2" stroke="#f1f6da" stroke-width="1.5"/>
<line x1="196.0" y1="201.1" x2="251.1" y2="151.0" stroke="#f1f6da" stroke-width="1.5"/>
<line x1="196.0" y1="201.1" x2="243.1" y2="243.2" stroke="#f1f6da" stroke-width="1.5"/>
<line x1="251.1" y1="151.0" x2="297.2" y2="192.1" stroke="#f1f6da" stroke-width="1.5"/>
<line x1="243.1" y1="243.2" x2="337.3" y2="156.0" stroke="#f1f6da" stroke-width="1.5"/>
<line x1="243.0" y1="258.2" x2="335.3" y2="178.0" stroke="#f1f6da" stroke-width="1.5"/>
<line x1="228.5" y1="58.0" x2="252.7" y2="36.5" stroke="#e6eec6" stroke-width="0.8"/>
<line x1="252.7" y1="36.5" x2="274.2" y2="55.2" stroke="#e6eec6" stroke-width="0.8"/>
<line x1="311.7" y1="94.0" x2="316.3" y2="89.5" stroke="#e6eec6" stroke-width="0.8"/>
<line x1="317.8" y1="94.0" x2="334.5" y2="110.8" stroke="#e6eec6" stroke-width="0.8"/>
<line x1="153.0" y1="132.0" x2="191.0" y2="163.6" stroke="#e6eec6" stroke-width="0.8"/>
<line x1="190.3" y1="162.0" x2="222.7" y2="130.4" stroke="#e6eec6" stroke-width="0.8"/>
<line x1="259.0" y1="224.0" x2="313.0" y2="177.0" stroke="#e6eec6" stroke-width="0.8"/>
<line x1="263.0" y1="239.0" x2="323.0" y2="187.0" stroke="#e6eec6" stroke-width="0.8"/>
<line x1="273.0" y1="156.0" x2="293.0" y2="140.0" stroke="#e6eec6" stroke-width="0.8"/>
<text x="374" y="240.5" font-family="Liberation Serif" font-size="35" textLength="19.5" lengthAdjust="spacingAndGlyphs" fill="#050505">Z</text>
<text x="391.5" y="236" font-family="Liberation Serif" font-size="35" fill="#050505">Y</text>
<text x="391.5" y="267" font-family="Liberation Serif" font-size="35" fill="#050505">X</text>
<path d="M388.4000000000001 238.39999999999998 L373.5 251.8 L388.9000000000001 265.8 M373.5 245 L373.5 252" fill="none" stroke="#e0e040" stroke-width="1"/>
</svg>
<div class="a" style="left:734px;top:438px;width:391px;height:256px;border:1px solid #c4c4c4;border-top-color:#9c9c9c;border-radius:3px;background:#fff"></div>
<div class="t" style="left:740px;top:450px"><b style="letter-spacing:-0.35px">Project:</b> Riverndale</div>
<div class="t" style="left:740px;top:465px"><b style="letter-spacing:-0.35px">Category:</b> Residential building</div>
<div class="t" style="left:740px;top:480px"><b style="letter-spacing:-0.35px">Level(s):</b> 2</div>
<div class="t" style="left:740px;top:510px"><b style="letter-spacing:-0.35px">North direction:</b> 350</div>
<div class="t" style="left:740px;top:540px"><b style="letter-spacing:-0.35px">Project address:</b></div>
<div class="t" style="left:752px;top:555px"><b style="letter-spacing:-0.35px"></b>1000 Buildes Road</div>
<div class="t" style="left:752px;top:570px"><b style="letter-spacing:-0.35px"></b>Saskatoon, USA</div>
<div class="t" style="left:740px;top:600px"><b style="letter-spacing:-0.35px">Designer(s)</b></div>
<div class="t" style="left:752px;top:615px"><b style="letter-spacing:-0.35px">Name:</b> John Doe, (Draftsman)</div>
<div class="t" style="left:752px;top:630px"><b style="letter-spacing:-0.35px">Contact number:</b> 333-012-3456</div>
<div class="t" style="left:752px;top:645px"><b style="letter-spacing:-0.35px">Email address:</b> johnD@buildesArc.org</div>
<div class="t" style="left:752px;top:660px"><b style="letter-spacing:-0.35px">Office:</b> K-Speed Offices</div>
<div class="a" style="left:621px;top:698px;width:2px;height:20px;border-left:1px solid #c4c4c4;border-right:1px solid #f0f0f0"></div>
<div class="a" style="left:707px;top:698px;width:2px;height:20px;border-left:1px solid #c4c4c4;border-right:1px solid #f0f0f0"></div>
<div class="t" style="left:636px;top:703px">Li 1</div>
<div class="t" style="left:660px;top:703px">|</div>
<div class="t" style="left:667px;top:703px">Co 0</div>
<svg class="a" style="left:1130px;top:707px" width="14" height="14" viewBox="0 0 14 14"><path d="M13 1 L1 13 L13 13 Z" fill="#e8e8e8"/><path d="M13 1 L1 13" stroke="#777" stroke-width="1"/></svg>
</body></html>
